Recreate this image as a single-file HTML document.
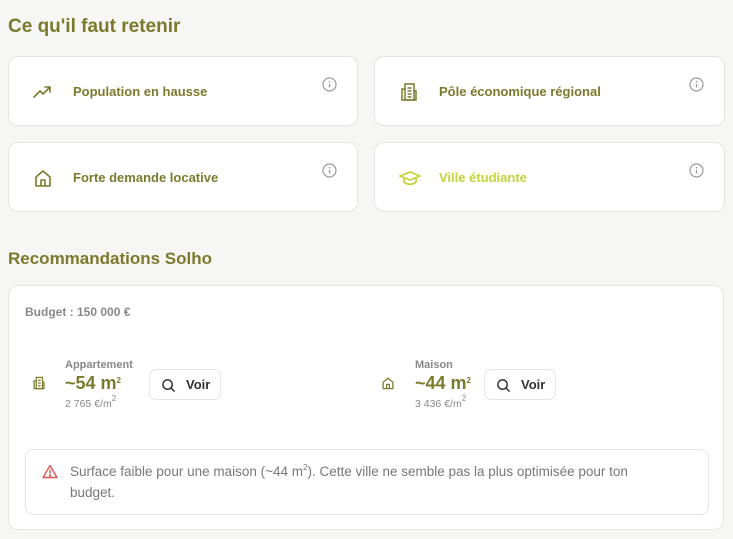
<!DOCTYPE html>
<html><head><meta charset="utf-8"><style>
*{box-sizing:border-box;margin:0;padding:0}
body{width:733px;height:539px;background:#f6f6f4;font-family:"Liberation Sans",sans-serif;position:relative;overflow:hidden;color:#7a7a2e}
.h{position:absolute;left:8px;font-weight:bold;color:#7b7a2c}
.card{position:absolute;background:#fff;border:1px solid #e4e4e2;border-radius:10px}
.card .t{position:absolute;left:64px;top:27px;font-size:13px;font-weight:bold;color:#7b7a2c}
.card .ic{position:absolute;left:24px;top:25px}
.card .in{position:absolute;right:20px;top:20px}
.big{position:absolute;left:8px;top:285px;width:716px;height:245px;background:#fff;border:1px solid #e4e4e2;border-radius:10px}
.btn{position:absolute;width:72px;height:31px;border:1px solid #e4e4e2;border-radius:7px;background:#fff;font-size:13px;font-weight:bold;color:#333}
.btn svg{position:absolute;left:11px;top:8px}
.btn span{position:absolute;left:36px;top:7px}
.lab{position:absolute;font-size:11px;font-weight:bold;color:#888}
.val{position:absolute;font-size:18px;font-weight:bold;color:#7b7a2c}
.pr{position:absolute;font-size:10.5px;color:#888}
sup{font-size:8px;vertical-align:6px;line-height:0}
</style></head><body>
<div class="h" style="top:16px;font-size:19px">Ce qu'il faut retenir</div>
<svg width="0" height="0" style="position:absolute"><defs><g id="info"><circle cx="7.5" cy="7.5" r="6.5" fill="none" stroke="#9a9a9a" stroke-width="1.2"/><line x1="7.5" y1="6.8" x2="7.5" y2="10.5" stroke="#9a9a9a" stroke-width="1.3"/><circle cx="7.5" cy="4.7" r="0.8" fill="#9a9a9a"/></g></defs></svg>
<div class="card" style="left:8px;top:56px;width:350px;height:70px">
<svg class="ic" width="20" height="20" viewBox="0 0 20 20" fill="none" stroke="#7b7a2c" stroke-width="1.6" stroke-linecap="round" stroke-linejoin="round"><path d="M1 15 L7 9 L10 12 L17 5 M12 5 H17 V10"/></svg>
<div class="t">Population en hausse</div>
<svg class="in" width="15" height="15"><use href="#info"/></svg></div>
<div class="card" style="left:374px;top:56px;width:351px;height:70px">
<svg class="ic" width="20" height="20" viewBox="0 0 20 20" fill="none" stroke="#7b7a2c" stroke-width="1.5"><rect x="6" y="2" width="9" height="16"/><path d="M6 7 H3 V18 H17 V9 H15 M8.5 6 H12.5 M8.5 9 H12.5 M8.5 12 H12.5 M8.5 15 H12.5"/></svg>
<div class="t">Pôle économique régional</div>
<svg class="in" width="15" height="15"><use href="#info"/></svg></div>
<div class="card" style="left:8px;top:142px;width:350px;height:70px">
<svg class="ic" width="20" height="20" viewBox="0 0 20 20" fill="none" stroke="#7b7a2c" stroke-width="1.6" stroke-linejoin="round"><path d="M3 9 L10 3 L17 9 V18 H3 Z M8 18 V12 H12 V18"/></svg>
<div class="t">Forte demande locative</div>
<svg class="in" width="15" height="15"><use href="#info"/></svg></div>
<div class="card" style="left:374px;top:142px;width:351px;height:70px">
<svg class="ic" width="22" height="20" viewBox="0 0 22 20" fill="none" stroke="#c3d23a" stroke-width="1.7" stroke-linejoin="round"><path d="M1 8 L11 4 L21 8 L11 12 Z M5 10 V14 C8 17 14 17 17 14 V10"/></svg>
<div class="t" style="color:#c3d23a">Ville étudiante</div>
<svg class="in" width="15" height="15"><use href="#info"/></svg></div>

<div class="h" style="top:249px;font-size:17px">Recommandations Solho</div>
<div class="big">
<div style="position:absolute;left:16px;top:19px;font-size:12px;font-weight:bold;color:#888">Budget : 150 000 €</div>
<svg style="position:absolute;left:23px;top:90px" width="14" height="14" viewBox="0 0 20 20" fill="none" stroke="#7b7a2c" stroke-width="1.8"><rect x="6" y="2" width="9" height="16"/><path d="M6 7 H3 V18 H17 V9 H15 M8.5 6 H12.5 M8.5 10 H12.5 M8.5 14 H12.5"/></svg>
<div class="lab" style="left:56px;top:73px">Appartement</div>
<div class="val" style="left:56px;top:87px">~54 m<sup>2</sup></div>
<div class="pr" style="left:56px;top:112px">2 765 €/m<sup>2</sup></div>
<div class="btn" style="left:140px;top:83px"><svg width="15" height="15" viewBox="0 0 16 16" fill="none" stroke="#333" stroke-width="1.6"><circle cx="7" cy="7" r="5"/><path d="M11 11 L14.5 14.5"/></svg><span>Voir</span></div>
<svg style="position:absolute;left:372px;top:90px" width="14" height="14" viewBox="0 0 20 20" fill="none" stroke="#7b7a2c" stroke-width="1.8" stroke-linejoin="round"><path d="M3 9 L10 3 L17 9 V18 H3 Z M8 18 V12 H12 V18"/></svg>
<div class="lab" style="left:406px;top:73px">Maison</div>
<div class="val" style="left:406px;top:87px">~44 m<sup>2</sup></div>
<div class="pr" style="left:406px;top:112px">3 436 €/m<sup>2</sup></div>
<div class="btn" style="left:475px;top:83px"><svg width="15" height="15" viewBox="0 0 16 16" fill="none" stroke="#333" stroke-width="1.6"><circle cx="7" cy="7" r="5"/><path d="M11 11 L14.5 14.5"/></svg><span>Voir</span></div>
<div style="position:absolute;left:16px;top:163px;width:684px;height:66px;border:1px solid #e4e4e2;border-radius:8px">
<svg style="position:absolute;left:16px;top:14px" width="16" height="15" viewBox="0 0 16 15" fill="none" stroke="#e05555" stroke-width="1.4" stroke-linejoin="round"><path d="M8 1.5 L15 13.5 H1 Z M8 5.5 V9.5"/><circle cx="8" cy="11.5" r="0.5" fill="#e05555"/></svg>
<div style="position:absolute;left:44px;top:11px;width:575px;font-size:13.5px;line-height:21px;color:#777">Surface faible pour une maison (~44 m<sup>2</sup>). Cette ville ne semble pas la plus optimisée pour ton budget.</div>
</div>
</div>
</body></html>
